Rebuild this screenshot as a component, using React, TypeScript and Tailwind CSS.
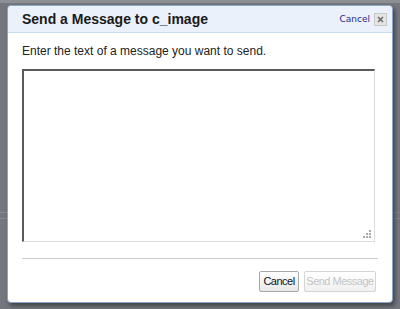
import React from "react";

export default function App() {
  return (
    <div className="w-[400px] h-[309px] bg-[#74787e] relative overflow-hidden" style={{ fontFamily: '"Liberation Sans", Arial, sans-serif' }}>
      <div className="absolute left-0 top-0 w-[400px] h-[3px] bg-[#8c8f94]" />
      <div className="absolute left-0 top-[212px] w-[400px] h-px bg-[#84878c]" />
      <div className="absolute left-0 top-[218px] w-[400px] h-px bg-[#84878c]" />
      <div className="absolute left-[7px] top-[5px] w-[386px] h-[298px] bg-white rounded-[4px] border border-[#8aa6c8] shadow-[2px_3px_4px_rgba(0,0,0,0.45)] flex flex-col">
        <div className="h-[27px] bg-[#eaf1fb] border-b border-[#c9dbf0] rounded-t-[4px] flex items-center pl-[14px] pr-[5px]">
          <div className="font-bold text-[14px] text-[#1a1a1a] flex-1">Send a Message to c_image</div>
          <span className="text-[9px] text-[#1c2a8c] mr-[4px] mt-[1px]" style={{ fontFamily: '"DejaVu Sans", Verdana, sans-serif' }}>Cancel</span>
          <div className="w-[13px] h-[13px] border border-[#c8c8c8] bg-[#e4e4e4] flex items-center justify-center">
            <svg width="7" height="7" viewBox="0 0 7 7"><path d="M1 1L6 6M6 1L1 6" stroke="#666" strokeWidth="1.5" /></svg>
          </div>
        </div>
        <div className="px-[14px] pt-[11px] flex flex-col">
          <div className="text-[12px] text-[#222] leading-[15px]">Enter the text of a message you want to send.</div>
          <div className="mt-[10px] h-[173px] w-[353px] border-t-2 border-l-2 border-t-[#5a5a5a] border-l-[#5a5a5a] border-r border-b border-r-[#dcdcdc] border-b-[#dcdcdc] relative">
            <svg className="absolute right-[2px] bottom-[2px]" width="9" height="9" viewBox="0 0 9 9">
              <rect x="6" y="0" width="2" height="2" fill="#aaa" />
              <rect x="3" y="3" width="2" height="2" fill="#aaa" />
              <rect x="6" y="3" width="2" height="2" fill="#aaa" />
              <rect x="0" y="6" width="2" height="2" fill="#aaa" />
              <rect x="3" y="6" width="2" height="2" fill="#aaa" />
              <rect x="6" y="6" width="2" height="2" fill="#aaa" />
            </svg>
          </div>
          <div className="mt-[16px] h-px w-[356px] bg-[#cccccc]" />
          <div className="flex justify-end gap-[5px] mt-[12px] pr-[2px]">
            <button className="h-[21px] w-[40px] text-[11px] tracking-[-0.5px] text-[#111] border border-[#a8a8a8] rounded-[2px] bg-gradient-to-b from-white to-[#e8e8e8]">Cancel</button>
            <button className="h-[21px] w-[72px] text-[11px] tracking-[-0.5px] text-[#c4c4c4] border border-[#d4d4d4] rounded-[2px] bg-gradient-to-b from-white to-[#f0f0f0] whitespace-nowrap">Send Message</button>
          </div>
        </div>
      </div>
    </div>
  );
}
